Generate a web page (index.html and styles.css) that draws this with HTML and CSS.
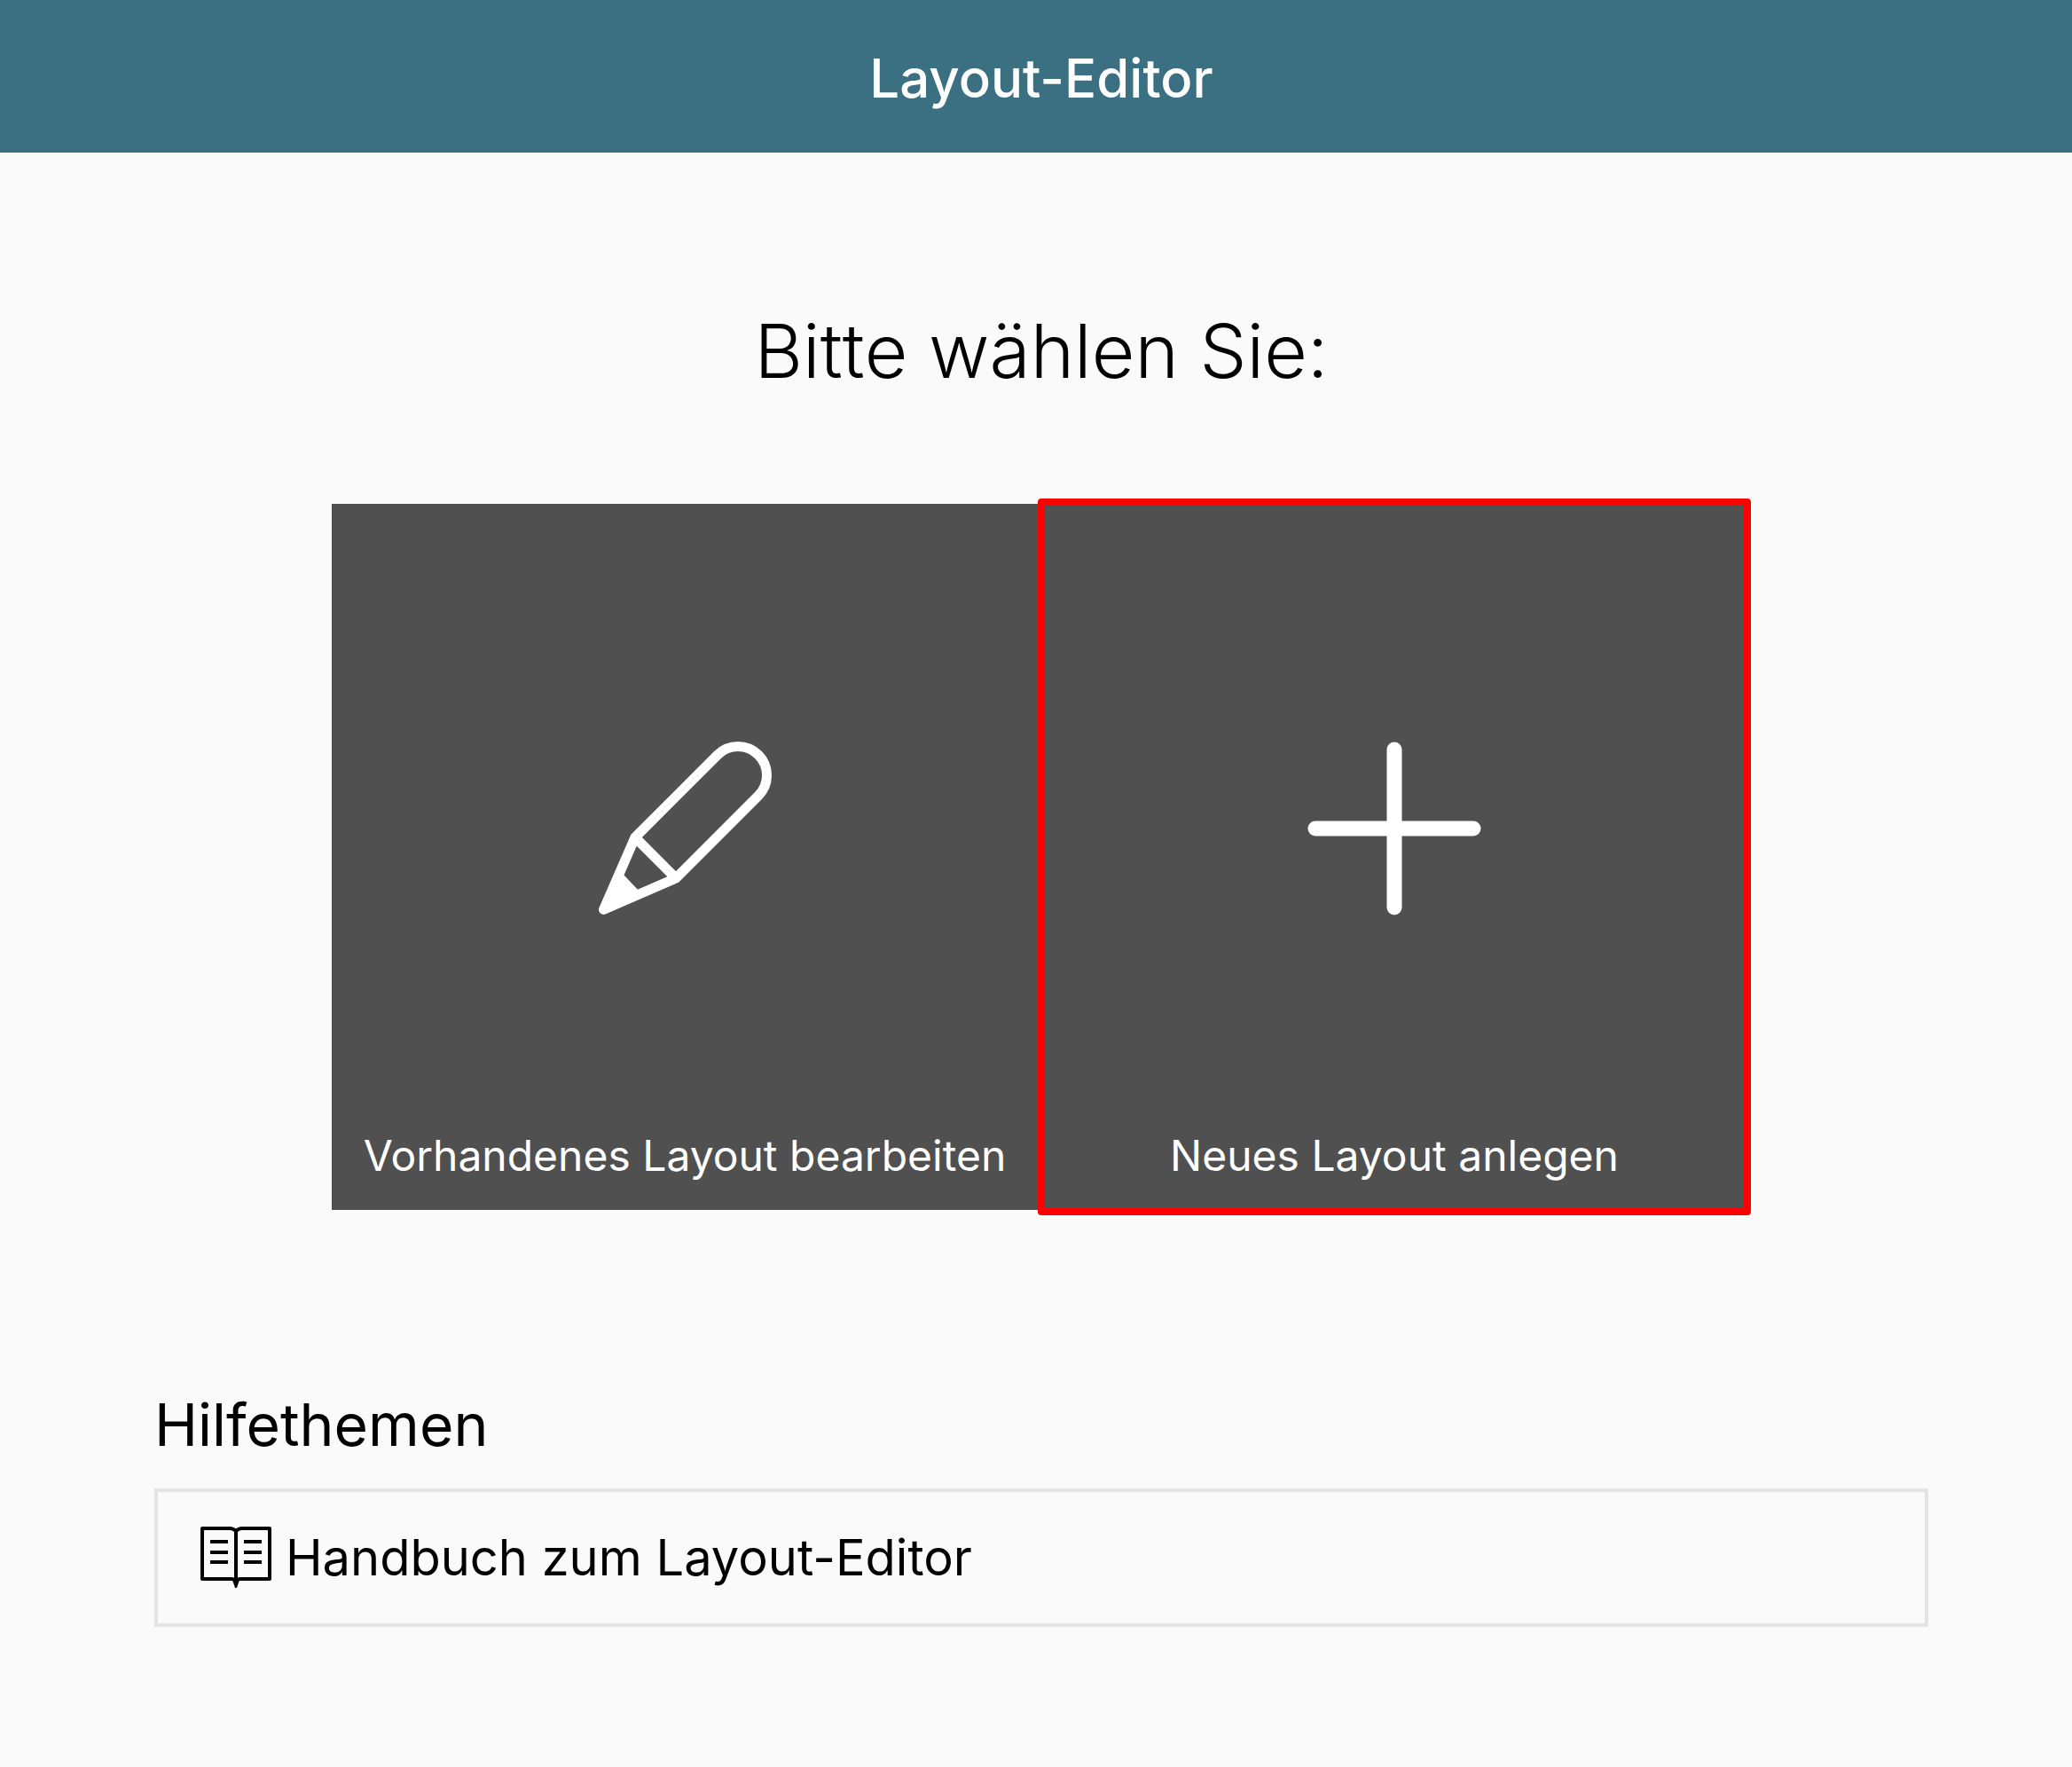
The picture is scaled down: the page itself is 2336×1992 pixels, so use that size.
FILE: index.html
```html
<!DOCTYPE html>
<html lang="de">
<head>
<meta charset="utf-8">
<meta name="viewport" content="width=device-width, initial-scale=1">
<title>Layout-Editor</title>
<link rel="stylesheet" href="styles.css">
</head>
<body>
<header class="topbar"><h1 class="topbar-title">Layout-Editor</h1></header>
<main class="content">
  <h2 class="prompt">Bitte wählen Sie:</h2>
  <div class="tiles">
    <button class="tile" type="button">
      <svg class="tile-icon" viewBox="24 25 196 196" aria-hidden="true">
        <path d="M66 133 L159 40 A31 31 0 0 1 205 86 L112 179 L30.500 214.500 Z" fill="none" stroke="#fff" stroke-width="11" stroke-linejoin="round"/>
        <path d="M66 133 L112 179" fill="none" stroke="#fff" stroke-width="11"/>
        <path d="M50 172 L72 195 L30 214 Z" fill="#fff"/>
      </svg>
      <span class="tile-label">Vorhandenes Layout bearbeiten</span>
    </button>
    <button class="tile tile-marked" type="button">
      <svg class="tile-icon" viewBox="24 25 196 196" aria-hidden="true">
        <path d="M122 34 V212 M33 123 H211" fill="none" stroke="#fff" stroke-width="17" stroke-linecap="round"/>
      </svg>
      <span class="tile-label">Neues Layout anlegen</span>
    </button>
  </div>
  <section class="help">
    <h3 class="help-title">Hilfethemen</h3>
    <a class="help-link" href="#handbuch">
      <svg class="help-icon" viewBox="0 0 84 72" aria-hidden="true">
        <path d="M41 6 Q38 3 34 3 H3 V60 H36 Q39 60 41 62 Q43 60 46 60 H79 V3 H48 Q44 3 41 6 V66" fill="none" stroke="#000" stroke-width="4" stroke-linejoin="round"/>
        <path d="M37 61 H45 L42 70 H40 Z"/>
        <path d="M12 18 H32 M12 30 H32 M12 41 H32 M50 18 H70 M50 30 H70 M50 41 H70" fill="none" stroke="#000" stroke-width="4"/>
      </svg>
      <span>Handbuch zum Layout-Editor</span>
    </a>
  </section>
</main>
</body>
</html>
```
FILE: styles.css
```css
* {
  box-sizing: border-box;
}

body {
  margin: 0;
  background: #fafafa;
  color: #000;
  font-family: Inter, "Liberation Sans", sans-serif;
}

h1, h2, h3 {
  margin: 0;
}

.topbar {
  padding: 48px 0 44px 12px;
  background: #3a7081;
  color: #fff;
  text-align: center;
}

.topbar-title {
  font-size: 60px;
  font-weight: 500;
  line-height: 80px;
}

.content {
  max-width: 2012px;
  margin: 0 auto;
  padding: 172px 0 96px 12px;
}

.prompt {
  font-size: 84px;
  font-weight: 300;
  font-kerning: none;
  line-height: 104px;
  text-align: center;
}

.tiles {
  display: grid;
  grid-template-columns: 1fr 1fr;
  gap: 4px;
  width: 80%;
  max-width: 1596px;
  margin: 120px 204px 0 200px;
}

.tile {
  position: relative;
  display: flex;
  flex-direction: column;
  align-items: center;
  aspect-ratio: 1;
  padding: 29px 0;
  border: 0;
  background: #505050;
  color: #fff;
  font: inherit;
}

.tile-icon {
  width: 196px;
  height: 196px;
  margin: auto 0;
  overflow: visible;
}

.tile-label {
  font-size: 48px;
  line-height: 64px;
}

.tile-marked::after {
  content: "";
  position: absolute;
  inset: -6px -4px;
  border: 8px solid #f00;
  border-radius: 4px;
}

.help {
  margin-top: 202px;
}

.help-title {
  font-size: 66px;
  font-weight: 400;
  line-height: 80px;
}

.help-link {
  display: flex;
  align-items: center;
  gap: 13px;
  margin-top: 32px;
  padding: 34px 47px;
  border: 4px solid #e4e4e4;
  color: #000;
  font-size: 56px;
  line-height: 80px;
  text-decoration: none;
}

.help-icon {
  width: 84px;
  height: 72px;
}
```
